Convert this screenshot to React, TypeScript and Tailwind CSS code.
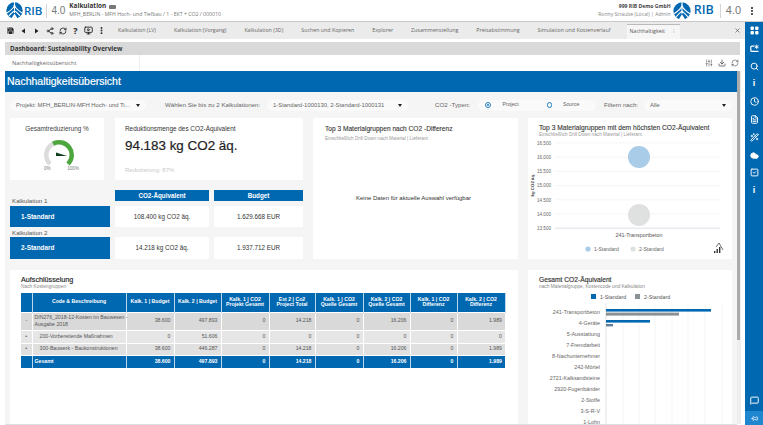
import { X, Search, Info, Clock, FileText, Wand2, Cloud, SquareCheck, MessageSquare, Pin, SlidersVertical, Download, RefreshCw, Save, Share2, MonitorPlay, MoreVertical } from "lucide-react";

const BLUE = "#0067b1";

function Logo({ s = 18 }: { s?: number }) {
  return (
    <svg width={s} height={s} viewBox="0 0 20 20">
      <circle cx="10" cy="10" r="9.6" fill={BLUE} />
      <path d="M10 0 C10.5 5 9 8 1 13 M10 0 C9.5 5 11 8 19 13 M10 6 L10 13 M3.5 16.5 C6 13 8 12 10 10 C12 12 14 13 16.5 16.5" stroke="#fff" strokeWidth="1.2" fill="none" />
      <path d="M6 20 L10 13.5 L14 20 Z" fill="#fff" />
    </svg>
  );
}

function Rib({ cls }: { cls: string }) {
  return <span className={`font-['Open_Sans'] font-semibold text-[#0067b1] leading-none ${cls}`}>RIB</span>;
}

function Tri({ left }: { left?: boolean }) {
  return (
    <svg width="5" height="6" viewBox="0 0 5 6">
      <path d={left ? "M4 0.5V5.5L0.5 3Z" : "M1 0.5V5.5L4.5 3Z"} fill="#222" />
    </svg>
  );
}

function Header() {
  return (
    <div className="h-[21px] shrink-0 bg-white flex items-center pl-[6px] pr-[5px] font-['Open_Sans']">
      <Logo s={17} />
      <Rib cls="text-[11.5px] ml-[1px]" />
      <div className="w-px h-[14px] bg-[#d5d5d5] ml-[4px]" />
      <span className="text-[10px] text-[#777] ml-[4px] font-['Liberation_Sans']">4.0</span>
      <div className="ml-[4px] flex flex-col leading-none">
        <div className="flex items-center gap-[3px] text-[6.4px] font-bold text-[#333]">
          Kalkulation
          <span className="w-[7px] h-[4px] bg-[#777] rounded-[1px]" />
        </div>
        <div className="text-[5.2px] text-[#777] mt-[2.5px]">MFH_BERLIN - MFH Hoch- und Tiefbau / 1 - EKT + CO2 / 000010</div>
      </div>
      <div className="ml-auto flex flex-col items-end leading-none">
        <div className="text-[5.1px] font-bold text-[#444]">999 RIB Demo GmbH</div>
        <div className="text-[5.1px] text-[#888] mt-[2.5px]">Ronny Straube (Local) | Admin</div>
      </div>
      <div className="ml-[2px]"><Logo s={18} /></div>
      <Rib cls="text-[12.5px] ml-[3px]" />
      <div className="w-px h-[14px] bg-[#d5d5d5] ml-[6px]" />
      <span className="text-[11px] text-[#777] ml-[5px] font-['Liberation_Sans']">4.0</span>
      <MoreVertical size={10} strokeWidth={3} className="text-[#222] ml-[6px] mr-[1px]" />
    </div>
  );
}

function ToolIcon({ children }: { children: React.ReactNode }) {
  return <span className="w-[13px] shrink-0 flex items-center justify-center">{children}</span>;
}

function Toolbar() {
  const tabs = ["Kalkulation (LV)", "Kalkulation (Vorgang)", "Kalkulation (3D)", "Suchen und Kopieren", "Explorer", "Zusammenstellung", "Preisabstimmung", "Simulation und Kostenverlauf"];
  return (
    <div className="h-[17px] shrink-0 bg-[#ebebeb] flex items-center font-['Open_Sans'] text-[5.3px] text-[#666]">
      <div className="w-[118px] shrink-0 flex items-center text-[#222] pl-[4px]">
        <ToolIcon><Save size={9} fill="#222" stroke="#fff" strokeWidth={1.4} /></ToolIcon>
        <ToolIcon><Tri left /></ToolIcon>
        <ToolIcon><Tri /></ToolIcon>
        <ToolIcon><Share2 size={8} strokeWidth={2.2} /></ToolIcon>
        <ToolIcon><RefreshCw size={8} strokeWidth={2.4} /></ToolIcon>
        <ToolIcon><span className="text-[9px] font-bold leading-none">?</span></ToolIcon>
        <ToolIcon><MonitorPlay size={9} strokeWidth={2.4} /></ToolIcon>
        <span className="ml-[2px]"><MoreVertical size={9} strokeWidth={3} /></span>
      </div>
      <div className="flex gap-[18px]">
        {tabs.map((t) => (
          <span key={t} className="whitespace-nowrap">{t}</span>
        ))}
      </div>
      <div className="ml-[16px] w-[53px] h-[15px] self-end bg-[#f6f6f6] border-t border-[#bbb] flex items-center pl-[3px] text-[#555]">
        Nachhaltigkeit
        <span className="ml-[8px] text-[#777]">⁝</span>
      </div>
      <X size={7} strokeWidth={2} className="text-[#444] ml-auto mr-[4px]" />
    </div>
  );
}

function SideGrid() {
  return (
    <svg width="9" height="9" viewBox="0 0 9 9" fill="#fff">
      <rect x="0.5" y="0.5" width="3.4" height="3.4" rx="1" />
      <rect x="5.1" y="0.5" width="3.4" height="3.4" rx="1" />
      <rect x="0.5" y="5.1" width="3.4" height="3.4" rx="1" />
      <rect x="5.1" y="5.1" width="3.4" height="3.4" rx="1" />
    </svg>
  );
}

function SideNew() {
  return (
    <svg width="9" height="9" viewBox="0 0 9 9" fill="none" stroke="#fff" strokeWidth="1.2">
      <path d="M4.5 2.2H1.8a1 1 0 0 0-1 1v3.2a1 1 0 0 0 1 1H8.5" />
      <path d="M6.7 0.6V5M4.8 1.7L8.6 3.9M8.6 1.7L4.8 3.9" strokeWidth="0.9" />
    </svg>
  );
}

function Sidebar() {
  const size = 9;
  const sw = 2.5;
  return (
    <div className="w-[18px] shrink-0 bg-[#0067b1] flex flex-col items-center text-white border-t border-[#c9c9c9]">
      <div className="flex flex-col items-center gap-[8.8px] pt-[4px]">
        <SideGrid />
        <SideNew />
        <Search size={size} strokeWidth={sw} />
        <Info size={size} strokeWidth={0} className="hidden" />
        <span className="h-[9px] text-[9px] leading-[9px] font-bold">i</span>
        <Clock size={size} strokeWidth={sw} />
        <FileText size={size} strokeWidth={sw} />
        <Wand2 size={size} strokeWidth={sw} />
        <Cloud size={size} strokeWidth={sw} fill="#fff" />
        <SquareCheck size={size} strokeWidth={sw} />
        <span className="h-[9px] text-[9px] leading-[9px] font-bold">i</span>
      </div>
      <MessageSquare size={9} strokeWidth={2.6} className="mt-auto mb-[6px]" />
      <div className="w-full h-[14px] bg-[#1f86d0] flex items-center justify-center"><Pin size={7} strokeWidth={2.4} className="rotate-90" /></div>
    </div>
  );
}

function Pill({ w, children }: { w: string; children: React.ReactNode }) {
  return (
    <div className={`h-[11px] bg-[#fafafa] rounded-full flex items-center pl-[6px] pr-[6px] text-[5.9px] text-[#666] ${w}`}>
      {children}
      <svg width="4" height="3" viewBox="0 0 4 3" className="ml-auto"><path d="M0 0H4L2 3Z" fill="#222" /></svg>
    </div>
  );
}

function Radio({ on }: { on?: boolean }) {
  return (
    <span className="w-[5.5px] h-[5.5px] rounded-full border border-[#1f7fc4] flex items-center justify-center shrink-0">
      {on && <span className="w-[2.5px] h-[2.5px] rounded-full bg-[#1f7fc4]" />}
    </span>
  );
}

function Filters() {
  return (
    <div className="h-[26px] shrink-0 flex items-center pl-[5px] text-[6.2px] text-[#666] whitespace-nowrap">
      <Pill w="w-[136px]">Projekt: MFH_BERLIN-MFH Hoch- und Ti...</Pill>
      <span className="ml-[19px] w-[102px]">Wählen Sie bis zu 2 Kalkulationen:</span>
      <Pill w="w-[141px]">1-Standard-1000130, 2-Standard-1000131</Pill>
      <span className="ml-[27px] w-[43px]">CO2 -Typen:</span>
      <div className="w-[118px] h-[11px] bg-[#fafafa] rounded-full flex items-center pl-[7px] text-[5.2px]">
        <Radio on />
        <span className="ml-[12px] w-[44px]">Project</span>
        <Radio />
        <span className="ml-[11px]">Source</span>
      </div>
      <span className="ml-[8px] w-[40px]">Filtern nach:</span>
      <Pill w="w-[88px]">Alle</Pill>
    </div>
  );
}

function Gauge() {
  const p = (deg: number, r: number) => {
    const a = (deg * Math.PI) / 180;
    return `${21 + r * Math.sin(a)} ${15 - r * Math.cos(a)}`;
  };
  const arc = (from: number, to: number) =>
    `M${p(from, 15)} A15 15 0 0 1 ${p(to, 15)} L${p(to, 10.5)} A10.5 10.5 0 0 0 ${p(from, 10.5)}Z`;
  return (
    <svg width="38" height="28" viewBox="0 0 38 28" className="mt-[6px]">
      <path d={arc(-135, -28)} fill="#dcdcdc" />
      <path d={arc(-28, 135)} fill="#4ea63f" />
      <path d="M18 12.5 L29 16 L18 16Z" fill="#0f3d1e" />
    </svg>
  );
}

function Card({ cls, children }: { cls: string; children?: React.ReactNode }) {
  return <div className={`bg-white ${cls}`}>{children}</div>;
}

function TopLeft() {
  return (
    <div className="w-[293px] shrink-0 h-[141px] flex flex-col">
      <div className="flex gap-[11px] h-[63px]">
        <Card cls="w-[94px] flex flex-col items-center pt-[6px]">
          <div className="text-[6.4px] text-[#444]">Gesamtreduzierung %</div>
          <Gauge />
          <div className="w-[35px] ml-[9px] flex justify-between text-[4.6px] text-[#777] -mt-[2px]"><span>0%</span><span>100%</span></div>
        </Card>
        <Card cls="w-[188px] pl-[10px] pt-[6px]">
          <div className="text-[6.4px] text-[#333]">Reduktionsmenge des CO2-Äquivalent</div>
          <div className="text-[13.4px] leading-[18px] mt-[3px] text-[#222] [-webkit-text-stroke:0.2px_#222]">94.183 kg CO2 äq.</div>
          <div className="text-[6px] text-[#c8c8c8] mt-[11px]">Reduzierung: 87%</div>
        </Card>
      </div>
      <div className="flex gap-[5px] mt-[10px]">
        <div className="w-[100px] flex flex-col text-[6.2px] text-[#555]">
          <div className="h-[16px] flex items-end pl-[2px] pb-[1px]">Kalkulation 1</div>
          <div className="h-[21px] bg-[#0067b1] text-white font-bold text-[6.4px] flex items-center pl-[11px]">1-Standard</div>
          <div className="h-[10px] flex items-end pl-[2px]">Kalkulation 2</div>
          <div className="h-[22px] bg-[#0067b1] text-white font-bold text-[6.4px] flex items-center pl-[11px]">2-Standard</div>
        </div>
        {[
          ["w-[94px]", "CO2-Äquivalent", "108.400 kg CO2 äq.", "14.218 kg CO2 äq."],
          ["w-[89px]", "Budget", "1.629.668 EUR", "1.937.712 EUR"],
        ].map(([w, h, a, b]) => (
          <div key={h} className={`${w} flex flex-col text-[6.3px] text-[#333]`}>
            <div className="h-[11px] bg-[#0067b1] text-white font-bold flex items-center justify-center">{h}</div>
            <div className="h-[21px] mt-[5px] bg-white flex items-center justify-center">{a}</div>
            <div className="h-[22px] mt-[10px] bg-white flex items-center justify-center">{b}</div>
          </div>
        ))}
      </div>
    </div>
  );
}

function BubbleChart() {
  const labels = ["16.500", "16.000", "15.500", "15.000", "14.500", "14.000", "13.500"];
  return (
    <svg width="204" height="121" viewBox="0 0 204 121" className="block">
      {labels.map((l, i) => {
        const y = 5 + i * 14.2;
        return (
          <g key={l}>
            <text x="23" y={y + 1.8} textAnchor="end" fontSize="4.6" fill="#666" fontFamily="Liberation Sans">{l}</text>
            <line x1="27" x2="192" y1={y} y2={y} stroke={i === 6 ? "#dde3e8" : "#f0f2f3"} strokeWidth={i === 6 ? 1 : 0.7} />
          </g>
        );
      })}
      <text transform="translate(5.5 47) rotate(-90)" textAnchor="middle" fontSize="4.4" fontWeight="700" fill="#333" fontFamily="Liberation Sans">kg CO2 äq.</text>
      <circle cx="111" cy="19" r="11" fill="#a9cce8" />
      <circle cx="111" cy="77" r="11" fill="#dfe0e0" />
      <text x="111" y="98.5" textAnchor="middle" fontSize="5.4" fill="#555" fontFamily="Liberation Sans">241-Transportbeton</text>
      <circle cx="60" cy="111" r="2.6" fill="#a9cce8" />
      <text x="66" y="113" fontSize="5" fill="#666" fontFamily="Liberation Sans">1-Standard</text>
      <circle cx="105" cy="111" r="2.6" fill="#dfe0e0" />
      <text x="111" y="113" fontSize="5" fill="#666" fontFamily="Liberation Sans">2-Standard</text>
      <g fill="#333">
        <rect x="186" y="113" width="1.4" height="2" />
        <rect x="188.5" y="111" width="1.4" height="4" />
        <rect x="191" y="109" width="1.4" height="6" />
      </g>
      <path d="M188 109 L191 105 L195 112" stroke="#333" strokeWidth="0.7" fill="none" />
    </svg>
  );
}

function BreakdownTable() {
  const cols = [11, 94, 48, 47, 48, 46, 48, 47, 47, 48];
  const heads = ["Code & Beschreibung", "Kalk. 1 | Budget", "Kalk. 2 | Budget", "Kalk. 1 | CO2 Projekt Gesamt", "Est 2 | Co2 Project Total", "Kalk. 1 | CO2 Quelle Gesamt", "Kalk. 2 | CO2 Quelle Gesamt", "Kalk. 1 | CO2 Differenz", "Kalk. 2 | CO2 Differenz"];
  const rows = [
    { m: "-", n: "DIN276_2018-12-Kosten im Bauwesen -\nAusgabe 2018", v: ["38.600", "497.893", "0", "14.218", "0", "16.206", "0", "1.989"], bg: "bg-[#d9d9d9]", h: "h-[18px]", indent: "pl-[2px]" },
    { m: "•", n: "200-Vorbereitende Maßnahmen", v: ["0", "51.606", "0", "0", "0", "0", "0", "0"], bg: "bg-[#e6e6e6]", h: "h-[13px]", indent: "pl-[7px]" },
    { m: "•", n: "300-Bauwerk - Baukonstruktionen", v: ["38.600", "446.287", "0", "14.218", "0", "16.206", "0", "1.989"], bg: "bg-[#e0e0e0]", h: "h-[12px]", indent: "pl-[7px]" },
  ];
  return (
    <table className="table-fixed border-collapse w-[484px] mt-[3px] text-[5.2px] text-[#555]">
      <colgroup>{cols.map((c, i) => <col key={i} style={{ width: c }} />)}</colgroup>
      <thead>
        <tr className="h-[19px] bg-[#0067b1] text-white font-bold leading-[5.6px]">
          <th className="border-r border-[#bcd6ea]" />
          {heads.map((h) => <th key={h} className="border-r border-[#bcd6ea] px-[3px] font-bold">{h}</th>)}
        </tr>
      </thead>
      <tbody>
        {rows.map((r) => (
          <tr key={r.n} className={`${r.h} ${r.bg} border-t border-white`}>
            <td className="text-center">{r.m}</td>
            <td className={`${r.indent} leading-[7.4px] border-l border-white whitespace-pre`}>{r.n}</td>
            {r.v.map((v, i) => <td key={i} className="text-right pr-[3px] border-l border-white">{v}</td>)}
          </tr>
        ))}
        <tr className="h-[13px] bg-[#0067b1] text-white font-bold border-t border-white">
          <td />
          <td className="pl-[2px] border-l border-[#bcd6ea]">Gesamt</td>
          {["38.600", "497.893", "0", "14.218", "0", "16.206", "0", "1.989"].map((v, i) => (
            <td key={i} className="text-right pr-[3px] border-l border-[#bcd6ea]">{v}</td>
          ))}
        </tr>
      </tbody>
    </table>
  );
}

function BarChart() {
  const cats = ["241-Transportbeton", "4-Geräte", "5-Ausstattung", "7-Fremdarbeit", "8-Nachunternehmer", "242-Mörtel", "2721-Kalksandsteine", "2920-Fugenbänder", "2-Stoffe", "3-S-R-V", "1-Lohn"];
  return (
    <svg width="204" height="134" viewBox="0 20 204 134" className="block">
      {[95, 111, 127, 144, 160, 177, 194].map((x) => (
        <line key={x} x1={x} x2={x} y1="33" y2="154" stroke="#f0f0f0" strokeWidth="0.7" />
      ))}
      <line x1="78" x2="78" y1="33" y2="154" stroke="#d5d5d5" strokeWidth="0.7" />
      <rect x="63" y="24" width="5" height="5" fill="#0067b1" />
      <text x="72" y="28.5" fontSize="5.3" fill="#555" fontFamily="Liberation Sans">1-Standard</text>
      <rect x="107" y="24" width="5" height="5" fill="#8a9296" />
      <text x="116" y="28.5" fontSize="5.3" fill="#555" fontFamily="Liberation Sans">2-Standard</text>
      {cats.map((c, i) => (
        <text key={c} x="72" y={44 + i * 11} textAnchor="end" fontSize="5.4" fill="#666" fontFamily="Liberation Sans">{c}</text>
      ))}
      <rect x="78" y="39" width="105" height="2.6" fill="#0067b1" />
      <rect x="78" y="42.6" width="73" height="3" fill="#8a9296" />
      <rect x="78" y="50" width="44" height="2.6" fill="#0067b1" />
      <rect x="78" y="54" width="7" height="2.4" fill="#5f7f96" />
    </svg>
  );
}

export default function App() {
  return (
    <div className="w-[763px] h-[425px] overflow-hidden bg-white flex flex-col font-['Liberation_Sans',sans-serif]">
      <Header />
      <div className="flex-1 flex min-h-0">
        <div className="flex-1 min-w-0 flex flex-col border-t border-[#c9c9c9]">
          <Toolbar />
          <div className="flex-1 min-h-0 pt-[3px] pl-[5px] pr-[5px] flex flex-col">
            <div className="h-[13px] shrink-0 bg-[#d9d9d9] flex items-center pl-[5px] font-['Open_Sans'] font-bold text-[6.3px] text-[#333]">Dashboard: Sustainability Overview</div>
            <div className="h-[16px] shrink-0 bg-white flex items-center font-['Open_Sans'] text-[5.6px] text-[#666]">
              <div className="w-[135px] h-full flex items-center pl-[7px] border-r border-[#eee]">Nachhaltigkeitsübersicht</div>
              <div className="ml-auto flex items-center gap-[5px] text-[#444] pr-[1px]">
                <SlidersVertical size={8} strokeWidth={1.6} />
                <Download size={8} strokeWidth={2.2} />
                <RefreshCw size={8} strokeWidth={1.6} />
              </div>
            </div>
            <div className="flex-1 min-h-0 flex">
              <div className="w-[732px] shrink-0 h-[354px] bg-[#f5f5f5] border-b border-[#ddd] overflow-hidden">
                <div className="h-[21px] bg-[#0067b1] text-white flex items-center pl-[2px] text-[10.5px] [-webkit-text-stroke:0.2px_#fff]">Nachhaltigkeitsübersicht</div>
                <Filters />
                <div className="flex gap-[10px] pl-[5px]">
                  <TopLeft />
                  <Card cls="w-[205px] h-[141px] pl-[12px] pt-[6px] flex flex-col">
                    <div className="text-[6.6px] text-[#333] [-webkit-text-stroke:0.1px_#333]">Top 3 Materialgruppen nach CO2 -Differenz</div>
                    <div className="text-[4.7px] text-[#999] mt-[1px]">Einschließlich Drill Down nach Material | Lieferant</div>
                    <div className="text-[6px] text-[#333] text-center pr-[16px] mt-[52px]">Keine Daten für aktuelle Auswahl verfügbar</div>
                  </Card>
                  <Card cls="w-[204px] h-[141px] pt-[6px]">
                    <div className="pl-[11px] text-[6.7px] text-[#333] [-webkit-text-stroke:0.1px_#333] whitespace-nowrap leading-[8px]">Top 3 Materialgruppen mit dem höchsten CO2-Äquivalent</div>
                    <div className="pl-[11px] text-[4.7px] text-[#999] leading-[6px]">Einschließlich Drill Down nach Material | Lieferant</div>
                    <BubbleChart />
                  </Card>
                </div>
                <div className="flex gap-[10px] pl-[5px] mt-[11px]">
                  <Card cls="w-[508px] h-[154px] pl-[11px] pt-[5px]">
                    <div className="text-[7.2px] text-[#222] [-webkit-text-stroke:0.15px_#222] leading-[9px]">Aufschlüsselung</div>
                    <div className="text-[4.8px] text-[#888] leading-[6px]">Nach Kostengruppen</div>
                    <BreakdownTable />
                  </Card>
                  <Card cls="w-[204px] h-[154px] overflow-hidden">
                    <div className="pl-[11px] pt-[5px] text-[6.7px] text-[#333] [-webkit-text-stroke:0.15px_#333] leading-[9px]">Gesamt CO2-Äquivalent</div>
                    <div className="pl-[11px] text-[4.8px] text-[#888] leading-[6px]">nach Materialgruppe, Kostencode und Kalkulation</div>
                    <BarChart />
                  </Card>
                </div>
              </div>
              <div className="w-[4px] shrink-0 bg-[#eeeeee] h-[353px]">
                <div className="w-[3px] h-[269px] bg-[#ababab]" />
              </div>
            </div>
          </div>
        </div>
        <Sidebar />
      </div>
    </div>
  );
}
